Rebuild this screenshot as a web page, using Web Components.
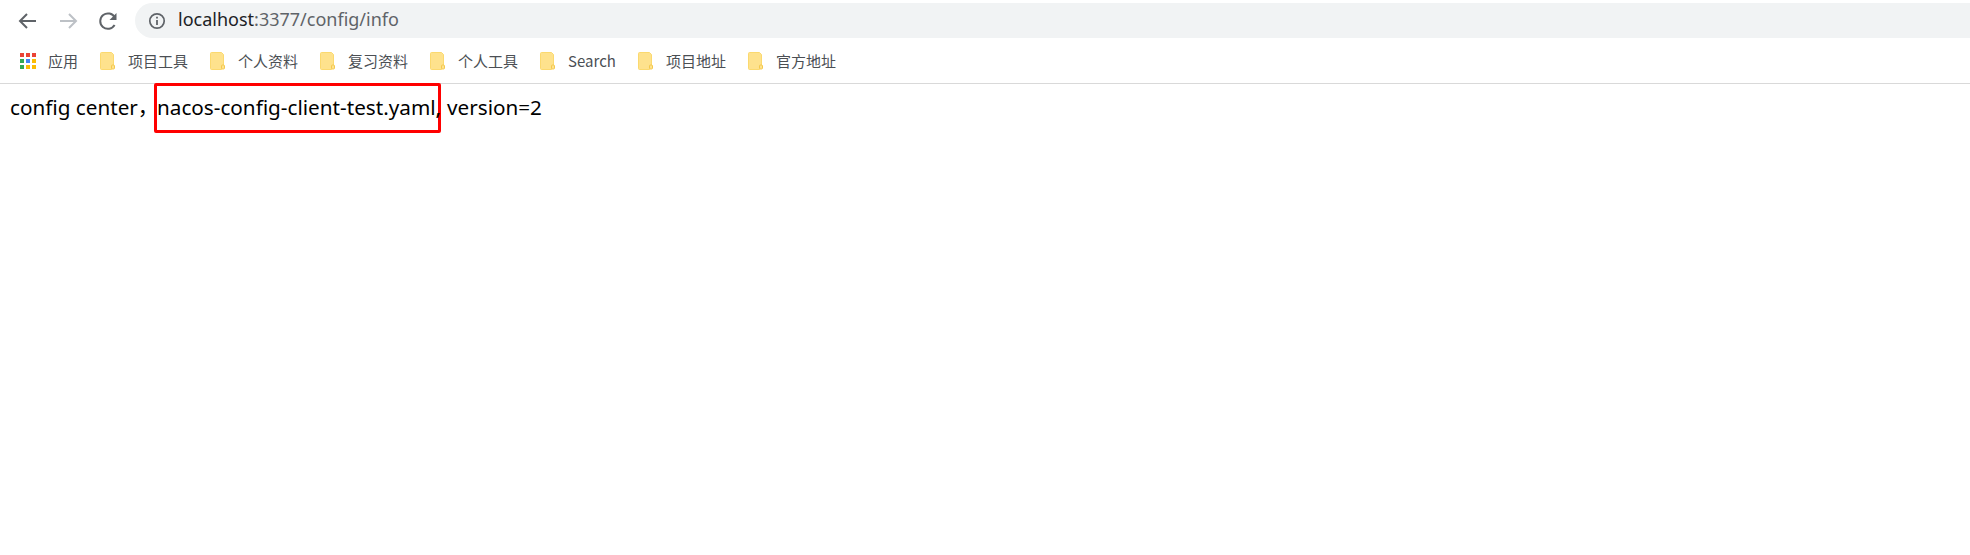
<!DOCTYPE html>
<html lang="zh">
<head>
<meta charset="utf-8">
<title>config info</title>
<style>
html, body { margin: 0; background: #fff; }
body { font-family: "Noto Sans CJK SC", "Noto Sans", sans-serif; }
</style>
</head>
<body>
<browser-toolbar url-host="localhost" url-path=":3377/config/info"></browser-toolbar>
<bookmark-bar>
    <bookmark-item type="apps" label="应用"></bookmark-item>
    <bookmark-item label="项目工具"></bookmark-item>
    <bookmark-item label="个人资料"></bookmark-item>
    <bookmark-item label="复习资料"></bookmark-item>
    <bookmark-item label="个人工具"></bookmark-item>
    <bookmark-item label="Search"></bookmark-item>
    <bookmark-item label="项目地址"></bookmark-item>
    <bookmark-item label="官方地址"></bookmark-item>
</bookmark-bar>
<page-content></page-content>

<script>
class BrowserToolbar extends HTMLElement {
    constructor() {
        super()
        this.root = this.attachShadow({mode: 'open'})
    }

    connectedCallback() {
        this.root.innerHTML = `
            <style>
            :host { display: flex; align-items: center; height: 35px; padding: 3px 0 0 17px; }
            svg { display: block; flex: none; }
            .nav { margin-right: 18px; }
            .address {
                flex: 1;
                display: flex;
                align-items: center;
                height: 35px;
                margin-left: 16px;
                padding-left: 13px;
                background: #f1f3f4;
                border-radius: 18px 0 0 18px;
                font: 18px/33px "Noto Sans", "Liberation Sans", sans-serif;
                color: #5f6368;
            }
            .address svg { margin-right: 12px; }
            .address span.url { height: 34px; margin-top: -1px; }
            .host { color: #202124; }
            </style>
            <svg class="nav" width="22" height="22" viewBox="0 0 22 22" fill="none" stroke="#5f6368" stroke-width="2"><path d="M19 11H3M10 4l-7 7 7 7"/></svg>
            <svg class="nav" width="22" height="22" viewBox="0 0 22 22" fill="none" stroke="#bdc1c6" stroke-width="2"><path d="M3 11h16M12 4l7 7-7 7"/></svg>
            <svg class="nav" style="margin-right:0" width="22" height="22" viewBox="0 0 22 22" fill="none"><path d="M17.6 15a7.7 7.7 0 1 1 .2-7.4" stroke="#5f6368" stroke-width="2"/><path d="M19.5 3v7h-7z" fill="#5f6368"/></svg>
            <div class="address">
                <svg width="18" height="18" viewBox="0 0 18 18" fill="none"><circle cx="9" cy="9" r="7.2" stroke="#5f6368" stroke-width="1.7"/><path d="M9 8v5" stroke="#5f6368" stroke-width="1.8"/><path d="M9 4.8v1.8" stroke="#5f6368" stroke-width="1.8"/></svg>
                <span class="url"><span class="host">${this.getAttribute('url-host')}</span>${this.getAttribute('url-path')}</span>
            </div>
        `
    }
}

class BookmarkBar extends HTMLElement {
    constructor() {
        super()
        this.root = this.attachShadow({mode: 'open'})
        this.root.innerHTML = `
            <style>
            :host {
                display: flex;
                align-items: center;
                gap: 22px;
                height: 45px;
                padding-left: 20px;
                border-bottom: 1px solid #d9d9d9;
            }
            </style>
            <slot></slot>
        `
    }
}

class BookmarkItem extends HTMLElement {
    constructor() {
        super()
        this.root = this.attachShadow({mode: 'open'})
    }

    connectedCallback() {
        const apps = this.getAttribute('type') === 'apps'
        const colors = ['#ea4335', '#ea4335', '#ea4335', '#34a853', '#4285f4', '#fbbc05', '#34a853', '#fbbc05', '#fbbc05']
        const cells = colors.map((c, i) =>
            `<rect x="${(i % 3) * 6}" y="${Math.floor(i / 3) * 6}" width="4" height="4" fill="${c}"/>`).join('')
        const icon = apps
            ? `<svg width="16" height="16" viewBox="0 0 16 16">${cells}</svg>`
            : `<svg width="15" height="18" viewBox="0 0 15 18"><path d="M1.5 0.5h10l2 2v13l-2 2h-10a1 1 0 0 1-1-1v-15a1 1 0 0 1 1-1z" fill="#fee28d" stroke="#fbd96f"/><rect x="11.5" y="13" width="3" height="4" rx="1" fill="#fee28d" stroke="#f4c84e"/></svg>`
        this.root.innerHTML = `
            <style>
            :host { display: flex; align-items: center; gap: ${apps ? 12 : 13}px; font: 15px "Noto Sans CJK SC", "Noto Sans", sans-serif; color: #4b4f54; }
            svg { display: block; flex: none; }
            </style>
            ${icon}<span>${this.getAttribute('label')}</span>
        `
    }
}

class PageContent extends HTMLElement {
    constructor() {
        super()
        this.root = this.attachShadow({mode: 'open'})
        this.root.innerHTML = `
            <style>
            :host { display: flex; align-items: flex-start; padding-left: 10px; font: 20.7px/30px "Noto Sans", "Noto Sans CJK SC", sans-serif; color: #000; }
            .text { flex: none; padding-top: 8px; white-space: nowrap; }
            .first { width: 129px; }
            .mark {
                flex: none;
                box-sizing: border-box;
                width: 287px;
                height: 50px;
                margin: -1px 6px 0 15px;
                padding-top: 6px;
                border: 3px solid #f00;
                border-radius: 2px;
                white-space: nowrap;
            }
            </style>
            <span class="text first">config center，</span>
            <span class="mark">nacos-config-client-test.yaml,</span>
            <span class="text">version=2</span>
        `
    }
}

window.customElements.define('browser-toolbar', BrowserToolbar)
window.customElements.define('bookmark-bar', BookmarkBar)
window.customElements.define('bookmark-item', BookmarkItem)
window.customElements.define('page-content', PageContent)
</script>
</body>
</html>
